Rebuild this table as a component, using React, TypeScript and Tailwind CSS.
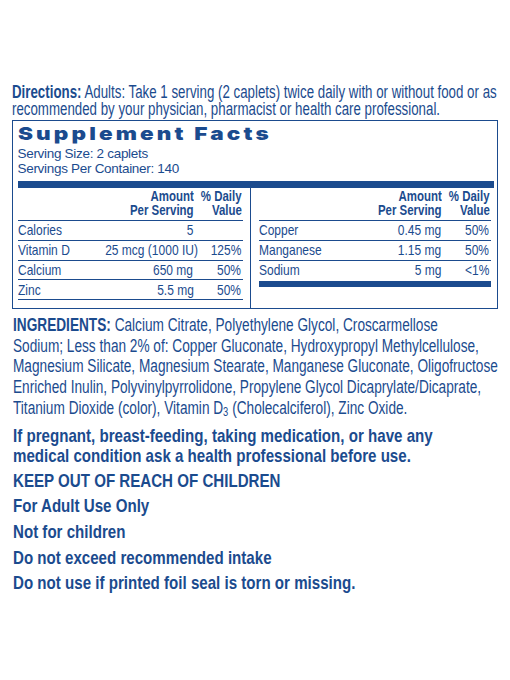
import React from 'react';

const ink = 'text-[#1b4b8e]';
const line = 'border-[#1b4b8e]';

const leftRows = [
  ['Calories', '5', ''],
  ['Vitamin D', '25 mcg (1000 IU)', '125%'],
  ['Calcium', '650 mg', '50%'],
  ['Zinc', '5.5 mg', '50%'],
];

const rightRows = [
  ['Copper', '0.45 mg', '50%'],
  ['Manganese', '1.15 mg', '50%'],
  ['Sodium', '5 mg', '<1%'],
];

// no condensed face installed, so narrow Liberation Sans by hand
const L: React.FC<{ children: React.ReactNode }> = ({ children }) => (
  <span className="inline-block origin-left scale-x-[0.8] whitespace-nowrap">{children}</span>
);
const R: React.FC<{ children: React.ReactNode }> = ({ children }) => (
  <span className="inline-block origin-right scale-x-[0.8] whitespace-nowrap">{children}</span>
);
const RB: React.FC<{ children: React.ReactNode }> = ({ children }) => (
  <span className="inline-block origin-right scale-x-[0.79] whitespace-nowrap">{children}</span>
);

const TableHead: React.FC = () => (
  <div className={`flex h-[33px] items-start border-b ${line} pt-[1px] text-[14.5px] font-bold leading-[14px]`}>
    <div className="flex flex-1 flex-col items-end">
      <RB>Amount</RB>
      <RB>Per Serving</RB>
    </div>
    <div className="flex w-[49px] flex-col items-end pr-[1px]">
      <RB>% Daily</RB>
      <RB>Value</RB>
    </div>
  </div>
);

const Row: React.FC<{ row: string[]; border?: boolean }> = ({ row, border = true }) => (
  <div className={`flex h-[19.75px] items-center text-[15px] leading-[18px] ${border ? `border-b ${line}` : ''}`}>
    <div className="flex-1">
      <L>{row[0]}</L>
    </div>
    <div className="text-right">
      <R>{row[1]}</R>
    </div>
    <div className="w-[49px] pr-[1px] text-right">
      <R>{row[2]}</R>
    </div>
  </div>
);

export default function App() {
  return (
    <div
      className={`h-[680px] w-[510px] overflow-hidden bg-white ${ink}`}
      style={{ fontFamily: '"Liberation Sans", Arial, sans-serif' }}
    >
      <div className="px-[12px] pt-[84px] text-[17.5px] leading-[17px]">
        <div className="origin-left scale-x-[0.76] whitespace-nowrap">
          <span className="font-bold">Directions:</span> Adults: Take 1 serving (2 caplets) twice daily with or without food or as
          <br />
          recommended by your physician, pharmacist or health care professional.
        </div>
      </div>

      <div className={`mx-[12px] mt-[2px] border-[1.5px] ${line}`}>
        <div className="pl-[4.5px] pr-[3.5px]">
          <div className="mt-[1px] h-[23px] text-[18px] font-black leading-[23px]" style={{ fontFamily: 'Inter, "DejaVu Sans", sans-serif' }}>
            <span className="inline-block origin-left scale-x-[1.25] tracking-[2.5px]">Supplement Facts</span>
          </div>
          <div className="pt-[1px] text-[13.5px] leading-[15px]">
            <div className="tracking-[-0.3px]">Serving Size: 2 caplets</div>
            <div className="tracking-[-0.3px]">Servings Per Container: 140</div>
          </div>
          <div className="mt-[5px] h-[7px] bg-[#1b4b8e]" />
        </div>

        <div className="grid grid-cols-[4.5px_225px_16px_232px_1fr]">
          <div />
          <div className="pb-[8px]">
            <TableHead />
            {leftRows.map((r) => (
              <Row key={r[0]} row={r} />
            ))}
          </div>
          <div className="flex justify-center">
            <div className="w-[1.5px] bg-[#1b4b8e]" />
          </div>
          <div className="pb-[20px]">
            <TableHead />
            {rightRows.map((r, i) => (
              <Row key={r[0]} row={r} border={i < rightRows.length - 1} />
            ))}
            <div className="mt-[1px] h-[6px] bg-[#1b4b8e]" />
          </div>
          <div />
        </div>
      </div>

      <div className="px-[13px] pt-[6px] text-[17.5px] leading-[20.7px]">
        <div className="origin-left scale-x-[0.78] whitespace-nowrap">
          <span className="font-bold">INGREDIENTS:</span> Calcium Citrate, Polyethylene Glycol, Croscarmellose
          <br />
          Sodium; Less than 2% of: Copper Gluconate, Hydroxypropyl Methylcellulose,
          <br />
          Magnesium Silicate, Magnesium Stearate, Manganese Gluconate, Oligofructose
          <br />
          Enriched Inulin, Polyvinylpyrrolidone, Propylene Glycol Dicaprylate/Dicaprate,
          <br />
          Titanium Dioxide (color), Vitamin D
          <sub className="relative top-[2px] text-[12px] leading-none">3</sub> (Cholecalciferol), Zinc Oxide.
        </div>
      </div>

      <div className="px-[13px] pt-[7px] text-[19px] font-bold">
        <div className="origin-left scale-x-[0.795] whitespace-nowrap">
          <div className="leading-[20px]">
            If pregnant, breast-feeding, taking medication, or have any
            <br />
            medical condition ask a health professional before use.
          </div>
          <div className="mt-[2px] leading-[25.7px]">
            <div>KEEP OUT OF REACH OF CHILDREN</div>
            <div>For Adult Use Only</div>
            <div>Not for children</div>
            <div>Do not exceed recommended intake</div>
            <div>Do not use if printed foil seal is torn or missing.</div>
          </div>
        </div>
      </div>
    </div>
  );
}
